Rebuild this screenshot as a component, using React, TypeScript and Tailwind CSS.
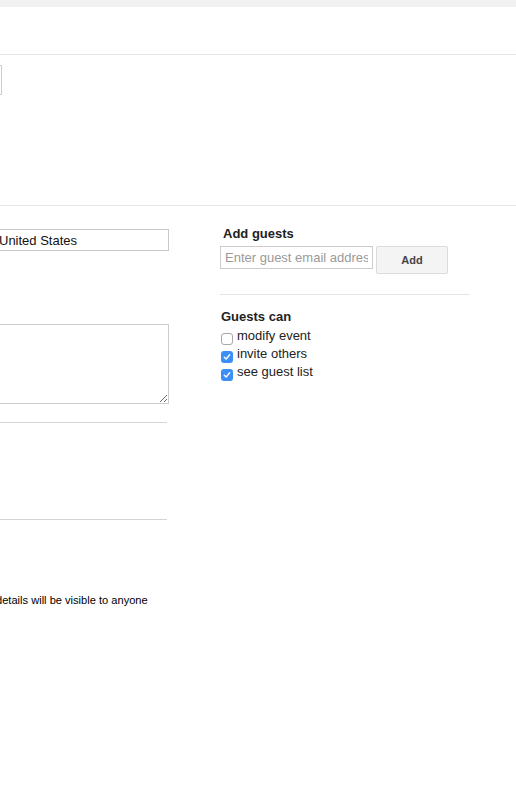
import React from "react";

const font = { fontFamily: '"Liberation Sans", Arial, sans-serif' };

function Check({ checked, label }: { checked: boolean; label: string }) {
  return (
    <label className="flex h-[18px] items-center text-[13px] leading-[18px] text-[#222]">
      {checked ? (
        <span className="mt-[6px] flex h-[12px] w-[12px] items-center justify-center rounded-[3px] bg-[#3b8ff6]">
          <svg width="8" height="8" viewBox="0 0 8 8" fill="none">
            <path d="M1.3 4.2 L3.2 6 L6.7 1.8" stroke="white" strokeWidth="1.4" strokeLinecap="round" strokeLinejoin="round" />
          </svg>
        </span>
      ) : (
        <span className="mt-[6px] h-[12px] w-[12px] rounded-[3px] border border-[#a8a8a8] bg-white" />
      )}
      <span className="ml-[4px]">{label}</span>
    </label>
  );
}

export default function App() {
  return (
    <div className="h-[802px] w-[516px] overflow-hidden bg-white" style={font}>
      <div className="h-[7px] bg-[#f1f1f1]" />
      <div className="h-[48px] border-b border-[#e5e5e5]" />

      <div className="h-[151px] border-b border-[#e5e5e5] pt-[10px]">
        <div className="-ml-[40px] h-[30px] w-[42px] border border-[#cccccc]" />
      </div>

      <div className="flex">
        <div className="w-[169px] shrink-0">
          <input
            className="ml-[-6px] mt-[23px] block h-[22px] w-[175px] border border-[#c8c8c8] pl-[4px] text-[13px] text-[#111] outline-none"
            defaultValue="United States"
          />
          <textarea className="ml-[-5px] mt-[73px] block h-[80px] w-[174px] border border-[#cccccc] outline-none" />
          <div className="mt-[18px] h-px w-[167px] bg-[#d4d4d4]" />
          <div className="mt-[96px] h-px w-[167px] bg-[#d4d4d4]" />
          <div className="ml-[-4px] mt-[73px] whitespace-nowrap text-[11.1px] leading-[14px] text-black">
            details will be visible to anyone
          </div>
        </div>

        <div className="ml-[51px] w-[250px]">
          <div className="ml-[3px] mt-[20px] text-[13px] font-bold leading-[15px] text-[#222]">Add guests</div>
          <div className="mt-[5px] flex items-start">
            <input
              className="block h-[23px] w-[153px] border border-[#cccccc] px-[4px] text-[13px] text-[#222] outline-none placeholder:text-[#9a9a9a]"
              placeholder="Enter guest email addresses"
            />
            <button className="ml-[3px] h-[28px] w-[72px] rounded-[2px] border border-[#dcdcdc] bg-[#f4f4f4] text-[11px] font-bold text-[#444]">
              Add
            </button>
          </div>
          <div className="mt-[20px] h-px w-[250px] bg-[#e5e5e5]" />
          <div className="ml-[1px] mt-[14px] text-[13px] font-bold leading-[15px] text-[#222]">Guests can</div>
          <div className="ml-[1px] mt-[3px]">
            <Check checked={false} label="modify event" />
            <Check checked label="invite others" />
            <Check checked label="see guest list" />
          </div>
        </div>
      </div>
    </div>
  );
}
